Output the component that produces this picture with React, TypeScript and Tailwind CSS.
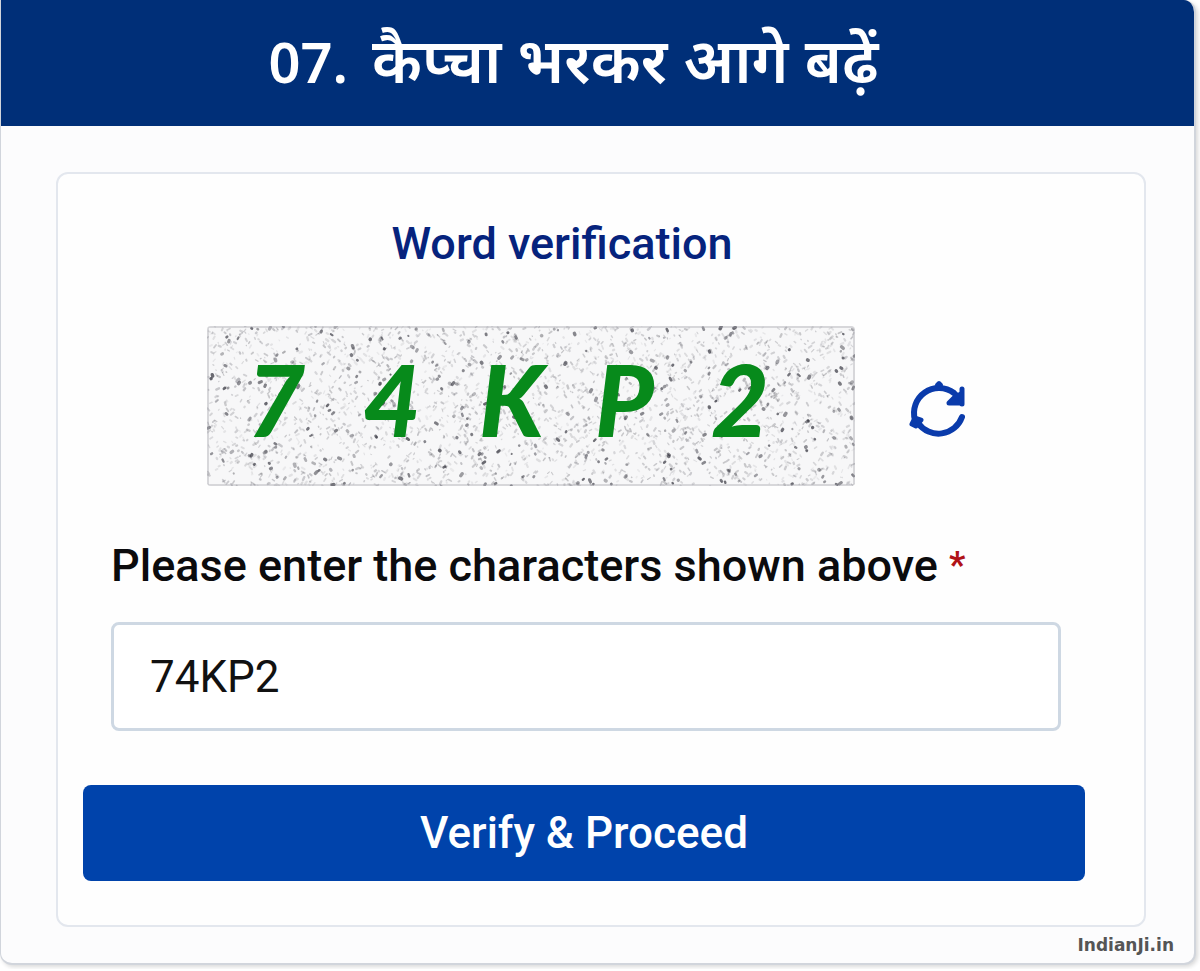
import { useState } from 'react';

const CAPTCHA = '74KP2';

type Speck = { x: number; y: number; dx: number; dy: number; w: number; o: number };

// small seeded generator so the noise is the same on every render
function makeSpecks(count: number, seed: number): Speck[] {
  let s = seed;
  const rand = () => {
    s = (s * 16807) % 2147483647;
    return s / 2147483647;
  };
  return Array.from({ length: count }, () => {
    const dark = rand() > 0.88;
    const edge = rand() > 0.97;
    const angle = rand() > 0.5 ? 0.4 + rand() * 0.9 : -0.4 - rand() * 0.8;
    const len = dark ? rand() * 2.5 : 0.5 + rand() * 3;
    const y = rand() * 160;
    return {
      x: rand() * 648,
      y: edge ? (y > 60 ? 158 : 3) : y,
      dx: Math.cos(angle) * len,
      dy: Math.sin(angle) * len,
      w: dark ? 2 + rand() * 1.6 : 1 + rand() * 1.4,
      o: dark ? 0.3 + rand() * 0.4 : 0.06 + rand() * 0.2,
    };
  });
}

const specks = makeSpecks(3000, 7421);

function CaptchaNoise() {
  return (
    <svg
      className="absolute inset-0 h-full w-full"
      viewBox="0 0 648 160"
      preserveAspectRatio="none"
      aria-hidden="true"
    >
      {specks.map((p, i) => (
        <line
          key={i}
          x1={p.x}
          y1={p.y}
          x2={p.x + p.dx}
          y2={p.y + p.dy}
          stroke="#2c2c36"
          strokeWidth={p.w}
          strokeOpacity={p.o}
          strokeLinecap="round"
        />
      ))}
      <rect x="1" y="1" width="646" height="158" fill="none" stroke="#9a9aa2" strokeOpacity="0.35" strokeWidth="2" />
    </svg>
  );
}

function RefreshIcon() {
  return (
    <svg className="h-15 w-15" viewBox="0 0 60 60" fill="none" stroke="#0a3bab" strokeWidth="6" strokeLinecap="round" strokeLinejoin="round" aria-hidden="true">
      <path d="M8 40 A25 25 0 0 1 47 13 L50 16" />
      <path d="M11 43 A25 25 0 0 0 55 37" />
      <path d="M55 9 V24" strokeWidth="5" />
      <path d="M54 23 L42 23 L47 18 L54 14 Z" fill="#0a3bab" strokeWidth="5" />
      <path d="M5 44 L8 38 L14 40 L9 46 Z" fill="#0a3bab" strokeWidth="5" />
      <path d="M30 5 L32 3 L34 5" strokeWidth="4" />
    </svg>
  );
}

export default function App() {
  const [value, setValue] = useState(CAPTCHA);

  return (
    <main className="w-full bg-white pr-1 pb-1 font-['Roboto','Noto_Sans',sans-serif]">
      <div className="relative overflow-hidden rounded-xl rounded-tl-none border-r-2 border-b-2 border-l border-gray-300 bg-[#fcfcfd] shadow-[2px_2px_4px_rgba(0,0,0,0.15)]">

        {/* HEADER */}
        <header className="flex h-[126px] items-center justify-center bg-[#002f78] pr-12 pb-2">
          <h1 className="flex items-baseline gap-6 font-['Noto_Sans','Noto_Sans_Devanagari',sans-serif] text-[62px] leading-none font-semibold whitespace-nowrap text-white">
            <span className="text-[56px]">07.</span>
            <span>कैप्चा भरकर आगे बढ़ें</span>
          </h1>
        </header>

        {/* CARD */}
        <form
          className="mt-[46px] mr-12 mb-9 ml-[55px] rounded-xl border-2 border-[#e3e7ee] bg-[#fefefe] pt-11 pr-[59px] pb-11 pl-[25px]"
          onSubmit={(e) => e.preventDefault()}
        >
          <h2 className="mr-11 text-center text-[45px] leading-[52px] font-medium text-[#06237d]">
            Word verification
          </h2>

          {/* CAPTCHA */}
          <div className="mt-14 ml-31 flex items-center gap-13">
            <div className="relative h-40 w-[648px] overflow-hidden rounded bg-[#f7f7f8]">
              <CaptchaNoise />
              <div className="relative grid h-full grid-cols-5 items-center pr-7 pb-4 pl-10 font-['Lato',sans-serif] text-[100px] leading-none font-black text-[#078a1b] italic">
                {CAPTCHA.split('').map((c, i) => (
                  <span key={i}>{c}</span>
                ))}
              </div>
            </div>
            <button type="button" aria-label="Refresh" className="pt-2" onClick={() => setValue('')}>
              <RefreshIcon />
            </button>
          </div>

          {/* INPUT */}
          <div className="mt-[54px] mr-6 ml-7">
            <label htmlFor="captcha" className="block text-[45px] leading-[52px] font-medium whitespace-nowrap text-[#0b0b0d]">
              Please enter the characters shown above{' '}
              <span className="align-[4px] text-[36px] leading-none font-bold text-[#b01217]">*</span>
            </label>
            <input
              id="captcha"
              type="text"
              value={value}
              onChange={(e) => setValue(e.target.value)}
              className="mt-[30px] h-[109px] w-full rounded-lg border-3 border-[#ced8e3] bg-white px-9 text-[44px] text-[#111111] outline-none"
            />
          </div>

          <button
            type="submit"
            className="mt-[54px] h-24 w-full rounded-lg bg-[#0043ab] text-[44px] font-medium text-white"
          >
            Verify &amp; Proceed
          </button>
        </form>

        <span className="absolute right-5 bottom-2 font-['DejaVu_Sans',sans-serif] text-[17px] leading-5 font-bold text-[#555555]">
          IndianJi.in
        </span>
      </div>
    </main>
  );
}
